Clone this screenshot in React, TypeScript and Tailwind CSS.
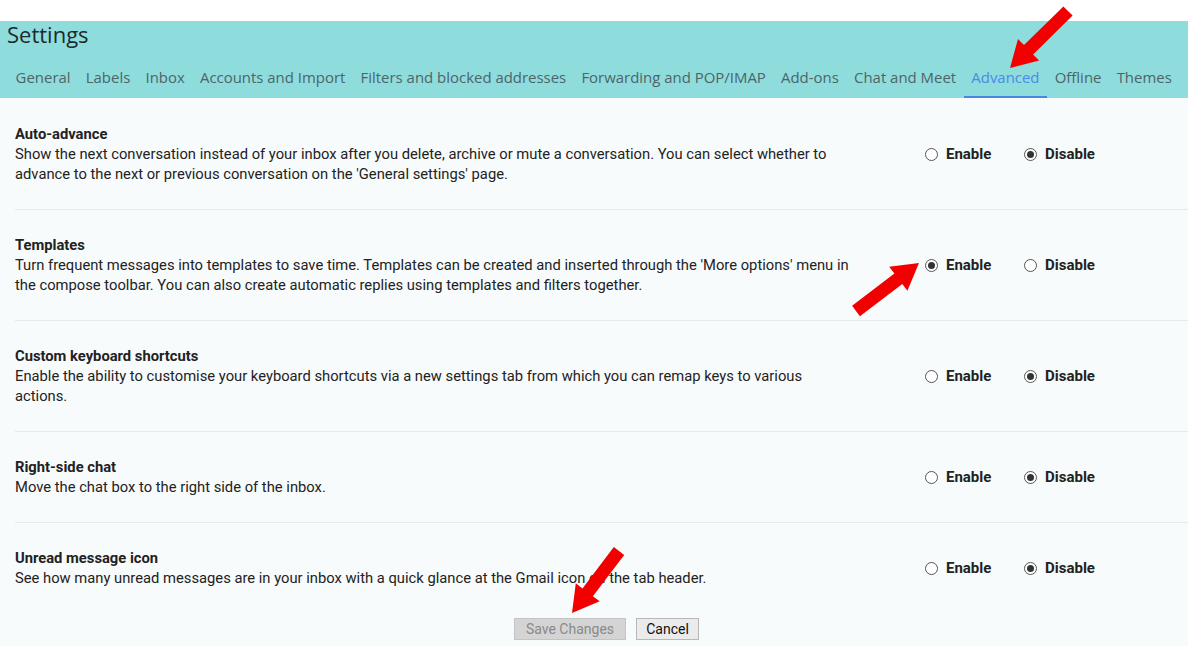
import React from "react";

const tabs = [
  "General",
  "Labels",
  "Inbox",
  "Accounts and Import",
  "Filters and blocked addresses",
  "Forwarding and POP/IMAP",
  "Add-ons",
  "Chat and Meet",
  "Advanced",
  "Offline",
  "Themes",
];

type Row = { title: string; desc: string; enabled: boolean };

const rows: Row[] = [
  {
    title: "Auto-advance",
    desc: "Show the next conversation instead of your inbox after you delete, archive or mute a conversation. You can select whether to advance to the next or previous conversation on the 'General settings' page.",
    enabled: false,
  },
  {
    title: "Templates",
    desc: "Turn frequent messages into templates to save time. Templates can be created and inserted through the 'More options' menu in the compose toolbar. You can also create automatic replies using templates and filters together.",
    enabled: true,
  },
  {
    title: "Custom keyboard shortcuts",
    desc: "Enable the ability to customise your keyboard shortcuts via a new settings tab from which you can remap keys to various actions.",
    enabled: false,
  },
  {
    title: "Right-side chat",
    desc: "Move the chat box to the right side of the inbox.",
    enabled: false,
  },
  {
    title: "Unread message icon",
    desc: "See how many unread messages are in your inbox with a quick glance at the Gmail icon on the tab header.",
    enabled: false,
  },
];

function Radio({ checked, label }: { checked: boolean; label: string }) {
  return (
    <div className="flex w-[99px] items-center">
      <span className="ml-[1px] flex h-[13px] w-[13px] items-center justify-center rounded-full border border-[#555] bg-white">
        {checked && <span className="h-[7px] w-[7px] rounded-full bg-[#333]" />}
      </span>
      <span className="ml-[8px] text-[15px] font-bold text-[#222]">{label}</span>
    </div>
  );
}

function arrow(tipX: number, tipY: number, tailX: number, tailY: number) {
  const dx = tipX - tailX;
  const dy = tipY - tailY;
  const len = Math.sqrt(dx * dx + dy * dy);
  const ux = dx / len;
  const uy = dy / len;
  const px = -uy;
  const py = ux;
  const shaft = 6.5;
  const head = 15;
  const headLen = 26;
  const bx = tipX - ux * headLen;
  const by = tipY - uy * headLen;
  const pts = [
    [tailX + px * shaft, tailY + py * shaft],
    [bx + px * shaft, by + py * shaft],
    [bx + px * head, by + py * head],
    [tipX, tipY],
    [bx - px * head, by - py * head],
    [bx - px * shaft, by - py * shaft],
    [tailX - px * shaft, tailY - py * shaft],
  ];
  return pts.map((p) => `${p[0].toFixed(1)},${p[1].toFixed(1)}`).join(" ");
}

export default function App() {
  return (
    <div
      className="relative h-[646px] w-[1188px] overflow-hidden bg-[#f8fbfc]"
      style={{ fontFamily: "Roboto, 'Liberation Sans', sans-serif" }}
    >
      <div className="h-[21px] bg-white" />
      <div className="h-[77px] bg-[#8fdcdd]">
        <div
          className="h-[30px] pl-[7px] text-[22px] leading-[27px] text-[#1d2a2b]"
          style={{ fontFamily: "'Open Sans', sans-serif" }}
        >
          Settings
        </div>
        <div
          className="flex h-[47px] items-stretch pl-[8px]"
          style={{ fontFamily: "'Open Sans', sans-serif" }}
        >
          {tabs.map((t) => (
            <div
              key={t}
              className={
                "flex shrink-0 items-center whitespace-nowrap px-[7.6px] pt-[8px] text-[14.95px] border-b-[2px] " +
                (t === "Advanced"
                  ? "border-[#4a86e0] text-[#4a8be6]"
                  : "border-transparent text-[#4d6568]")
              }
            >
              {t}
            </div>
          ))}
        </div>
      </div>

      <div className="ml-[15px] pt-[1px]">
        {rows.map((r, i) => (
          <div
            key={r.title}
            className={
              "flex items-center " +
              (i < rows.length - 1 ? "border-b border-[#e6eaec] py-[25px]" : "pt-[25px] pb-[30px]")
            }
          >
            <div className="w-[909px] text-[14.75px] leading-[20px] text-[#222]">
              <div className="font-bold">{r.title}</div>
              <div className="w-[840px]">{r.desc}</div>
            </div>
            <Radio checked={r.enabled} label="Enable" />
            <Radio checked={!r.enabled} label="Disable" />
          </div>
        ))}
      </div>

      <div className="flex items-center pl-[514px]">
        <button className="h-[22px] w-[112px] border border-[#c4c4c4] bg-[#d4d4d4] text-[14px] leading-[20px] text-[#8a8a8a]">
          Save Changes
        </button>
        <button className="ml-[10px] h-[22px] w-[63px] border border-[#b8b8b8] bg-[#ebebeb] text-[14px] leading-[20px] text-[#111]">
          Cancel
        </button>
      </div>

      <svg
        className="pointer-events-none absolute left-0 top-0"
        width={1188}
        height={646}
        viewBox="0 0 1188 646"
      >
        <polygon points={arrow(1010, 68, 1068, 11)} fill="#f20000" />
        <polygon points={arrow(919, 263, 856, 311)} fill="#f20000" />
        <polygon points={arrow(572, 613, 619, 551)} fill="#f20000" />
      </svg>
    </div>
  );
}
